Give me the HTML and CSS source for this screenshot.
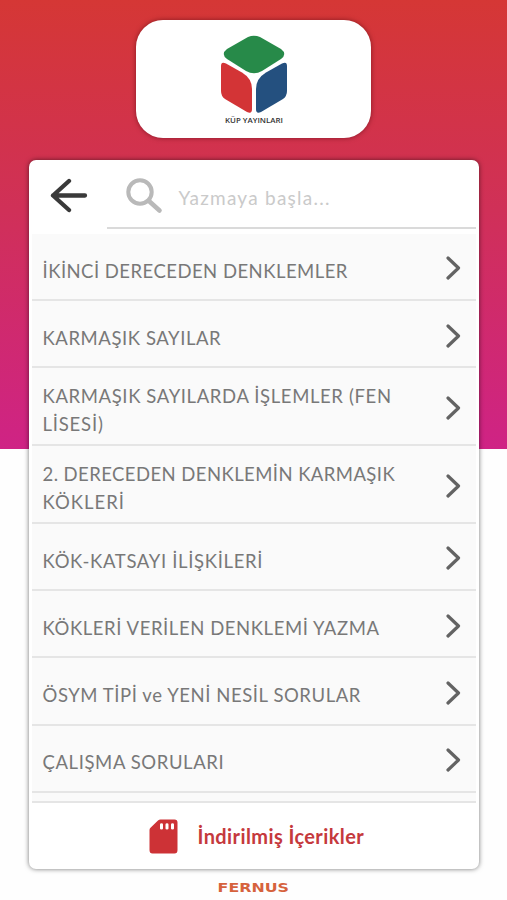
FILE: index.html
```html
<!DOCTYPE html>
<html lang="tr">
<head>
<meta charset="utf-8">
<title>Küp Yayınları</title>
<link rel="stylesheet" href="styles.css">
</head>
<body>
<svg class="defs" width="0" height="0" aria-hidden="true">
  <symbol id="chevron" viewBox="0 0 16 24"><path d="M2 2 12.500 12 2 22" fill="none" stroke="currentColor" stroke-width="3.2" stroke-linecap="round" stroke-linejoin="round"/></symbol>
</svg>
<div class="screen">
  <div class="brand">
    <svg class="cube" viewBox="0 0 68 80" aria-hidden="true">
      <path fill="#278a49" d="M28 2Q34-.5 40 2L61 14Q67.500 19 61 24L42 36Q34 40.500 26 36L7 24Q.5 19 7 14Z"/>
      <path fill="#d33436" d="M1 31Q1 26 6 28.500L22 37.500Q32 43.500 32 54V74Q32 79.500 27 77L5 64Q1 61 1 56Z"/>
      <path fill="#24507f" d="M67 31Q67 26 62 28.500L46 37.500Q36 43.500 36 54V74Q36 79.500 41 77L63 64Q67 61 67 56Z"/>
    </svg>
    <div class="brand-name">KÜP YAYINLARI</div>
  </div>
  <main class="card">
    <header class="top">
      <svg class="back" viewBox="0 0 38 36" aria-hidden="true"><path d="M35 17.500H3M19 3 3 17.500 19 32" fill="none" stroke="#3a3a3a" stroke-width="4.300" stroke-linecap="round" stroke-linejoin="round"/></svg>
      <div class="search">
        <svg class="lens" viewBox="0 0 38 36" aria-hidden="true"><circle cx="14" cy="14" r="11.700" fill="none" stroke="#b9b9b9" stroke-width="4"/><path d="M23.500 23.500 33.500 32.500" stroke="#b9b9b9" stroke-width="4.600" stroke-linecap="round"/></svg>
        <span class="hint">Yazmaya başla...</span>
      </div>
    </header>
    <ul class="list">
      <li><span class="t r1">İKİNCİ DERECEDEN DENKLEMLER</span><svg class="chev"><use href="#chevron"/></svg></li>
      <li><span class="t r2">KARMAŞIK SAYILAR</span><svg class="chev"><use href="#chevron"/></svg></li>
      <li class="two"><span class="t"><span class="r3">KARMAŞIK SAYILARDA İŞLEMLER (FEN</span><br><span class="r3b">LİSESİ)</span></span><svg class="chev"><use href="#chevron"/></svg></li>
      <li class="two"><span class="t"><span class="r4">2. DERECEDEN DENKLEMİN KARMAŞIK</span><br><span class="r4b">KÖKLERİ</span></span><svg class="chev"><use href="#chevron"/></svg></li>
      <li><span class="t r5">KÖK-KATSAYI İLİŞKİLERİ</span><svg class="chev"><use href="#chevron"/></svg></li>
      <li><span class="t r6">KÖKLERİ VERİLEN DENKLEMİ YAZMA</span><svg class="chev"><use href="#chevron"/></svg></li>
      <li><span class="t r7">ÖSYM TİPİ ve YENİ NESİL SORULAR</span><svg class="chev"><use href="#chevron"/></svg></li>
      <li><span class="t r8">ÇALIŞMA SORULARI</span><svg class="chev"><use href="#chevron"/></svg></li>
    </ul>
    <footer class="downloads">
      <svg class="sd" viewBox="0 0 29 35" aria-hidden="true"><path fill="#cd3236" fill-rule="evenodd" d="M11.500.5H25.500Q28.500.5 28.500 3.500V31Q28.500 34.500 25.500 34.500H3.500Q.5 34.500.5 31V11Q.5 9.800 1.500 8.800L9 1.500Q10 .5 11.500.5ZM11 5.500V9.500Q11 10.500 12.500 10.500T14 9.500V5.500Q14 4.300 12.500 4.300T11 5.500ZM16.500 5.500V9.500Q16.500 10.500 18 10.500T19.500 9.500V5.500Q19.500 4.300 18 4.300T16.500 5.500ZM22 5.500V9.500Q22 10.500 23.500 10.500T25 9.500V5.500Q25 4.300 23.500 4.300T22 5.500Z"/></svg>
      <span class="dl-text">İndirilmiş İçerikler</span>
    </footer>
  </main>
  <div class="maker">FERNUS</div>
</div>
</body>
</html>
```

FILE: styles.css
```css
* { box-sizing: border-box; }
body { margin: 0; background: #fff; font-family: Lato, sans-serif; }
.defs { display: block; }
.screen {
  height: 900px;
  display: flex;
  flex-direction: column;
  align-items: center;
  padding-top: 20px;
  overflow: hidden;
  background: linear-gradient(#d53735 0, #d03058 210px, #cf2385 449px) 0 0 / 100% 449px no-repeat #fefefe;
}
.brand {
  width: 235px;
  height: 118px;
  flex: none;
  border-radius: 27px;
  background: #fff;
  box-shadow: 0 0 5px rgba(70, 0, 10, .55);
  display: flex;
  flex-direction: column;
  align-items: center;
  padding: 15px 0 0 1px;
}
.cube { width: 68px; height: 80px; flex: none; }
.brand-name { margin-top: 1px; font: 600 7.900px/9px "Open Sans", sans-serif; color: #333; white-space: nowrap; }
.card {
  width: 450px;
  height: 709px;
  flex: none;
  margin-top: 22px;
  border-radius: 7px;
  background: #fff;
  box-shadow: 0 0 5px rgba(0, 0, 0, .55);
}
.top { height: 74px; display: flex; padding: 0 3px 5px 21px; }
.back { width: 38px; height: 36px; margin-top: 18px; }
.search { flex: 1; margin-left: 19px; padding-left: 18px; border-bottom: 2px solid #dadada; display: flex; }
.lens { width: 38px; height: 36px; margin: 18px 0 0 1px; }
.hint { margin: 26px 0 0 15px; font-size: 19px; line-height: 24px; color: #cacaca; letter-spacing: 1.250px; white-space: nowrap; }
.list { list-style: none; margin: 0 3px; padding: 0; height: 569px; background: #fafafa; border-bottom: 2px solid #e5e5e5; }
.list li {
  height: 67.200px;
  display: flex;
  align-items: center;
  justify-content: space-between;
  padding: 3.500px 14px 0 11px;
  border-bottom: 2px solid #e5e5e5;
}
.list .two { height: 77.800px; }
.t { font-size: 18.500px; line-height: 28px; color: #787878; white-space: nowrap; padding-top: 4.500px; }
.two .t { padding-top: 4px; }
.r1 { letter-spacing: .47px; }
.r2 { letter-spacing: .57px; }
.r3 { letter-spacing: .62px; }
.r3b { letter-spacing: .8px; }
.r4 { letter-spacing: .43px; }
.r4b { letter-spacing: 1px; }
.r5 { letter-spacing: .67px; }
.r6 { letter-spacing: .57px; }
.r7 { letter-spacing: .57px; }
.r8 { letter-spacing: .6px; }
.chev { width: 16px; height: 24px; color: #636363; flex: none; }
.downloads { height: 66px; display: flex; align-items: center; padding-left: 120px; }
.sd { width: 29px; height: 35px; margin-right: 20px; }
.dl-text { font-size: 20px; font-weight: 700; line-height: 24px; letter-spacing: .4px; color: #c5393d; white-space: nowrap; }
.maker { margin-top: 11px; font: 700 13px/16px "DejaVu Sans", sans-serif; color: #d6623d; transform: scaleX(1.22); }
```
